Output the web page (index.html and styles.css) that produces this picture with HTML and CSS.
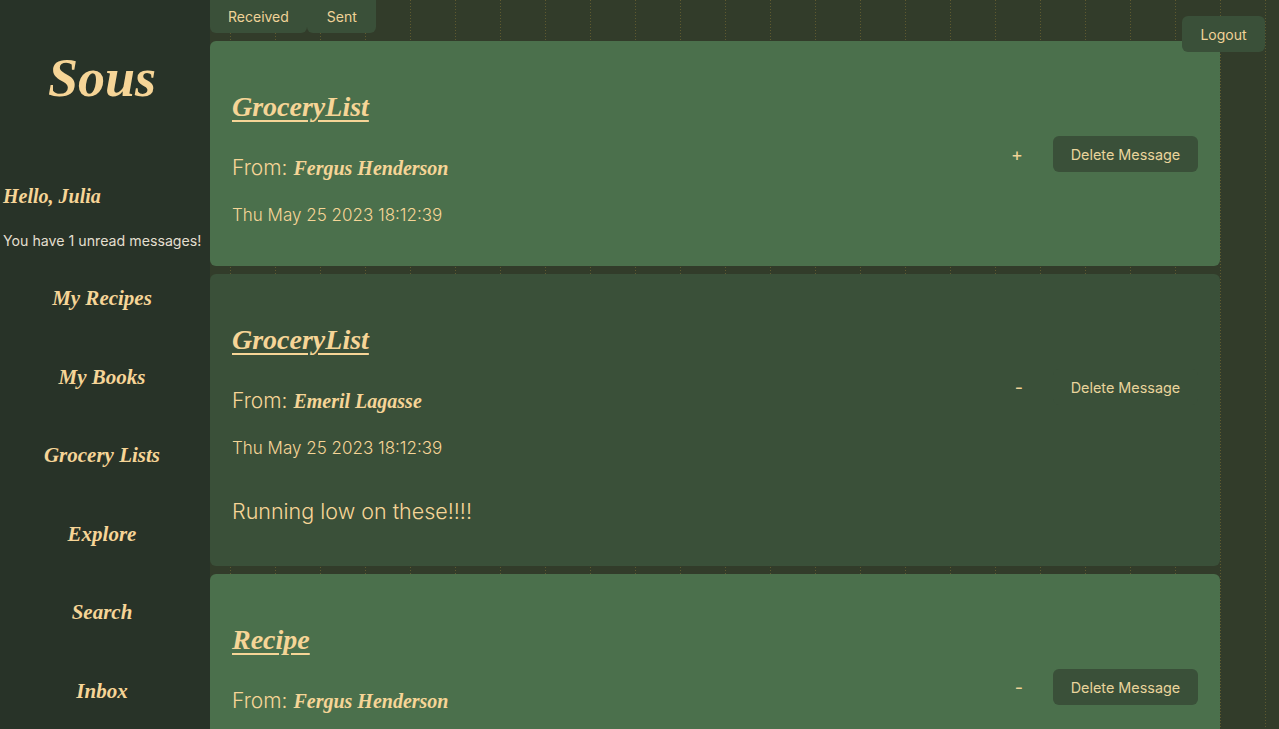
FILE: index.html
```html
<!DOCTYPE html>
<html lang="en">
<head>
<meta charset="utf-8">
<title>Sous - Inbox</title>
<link rel="stylesheet" href="styles.css">
</head>
<body>
<div class="app">
  <aside class="sidebar">
    <h1 class="logo">Sous</h1>
    <p class="hello">Hello, Julia</p>
    <p class="unread">You have 1 unread messages!</p>
    <nav class="nav">
      <a href="#">My Recipes</a>
      <a href="#">My Books</a>
      <a href="#">Grocery Lists</a>
      <a href="#">Explore</a>
      <a href="#">Search</a>
      <a href="#">Inbox</a>
    </nav>
  </aside>
  <main class="main">
    <div class="tabs">
      <button class="tab">Received</button>
      <button class="tab tab-sent">Sent</button>
    </div>
    <section class="card card-light">
      <div class="card-head">
        <div class="info">
          <h2 class="title"><a href="#">GroceryList</a></h2>
          <p class="from">From: <span class="sender">Fergus Henderson</span></p>
          <p class="date">Thu May 25 2023 18:12:39</p>
        </div>
        <div class="actions">
          <span class="toggle">+</span>
          <button class="delete">Delete Message</button>
        </div>
      </div>
    </section>
    <section class="card card-dark">
      <div class="card-head">
        <div class="info">
          <h2 class="title"><a href="#">GroceryList</a></h2>
          <p class="from">From: <span class="sender">Emeril Lagasse</span></p>
          <p class="date">Thu May 25 2023 18:12:39</p>
        </div>
        <div class="actions">
          <span class="toggle minus">-</span>
          <button class="delete">Delete Message</button>
        </div>
      </div>
      <p class="body">Running low on these!!!!</p>
    </section>
    <section class="card card-light">
      <div class="card-head">
        <div class="info">
          <h2 class="title"><a href="#">Recipe</a></h2>
          <p class="from">From: <span class="sender">Fergus Henderson</span></p>
          <p class="date">Thu May 25 2023 18:12:39</p>
        </div>
        <div class="actions">
          <span class="toggle minus">-</span>
          <button class="delete">Delete Message</button>
        </div>
      </div>
    </section>
  </main>
  <button class="logout">Logout</button>
</div>
</body>
</html>
```
FILE: styles.css
```css
* { box-sizing: border-box; }
html, body { margin: 0; padding: 0; height: 100%; overflow: hidden; }
body {
  background-color: #323c2a;
  background-image:
    linear-gradient(to bottom, transparent 0 1px, #323c2a 1px 3px),
    linear-gradient(to right, #5f5a2f 0 1px, transparent 1px 45px);
  background-size: 100% 3px, 45px 100%;
  background-position: 0 0, 5px 0;
  font-family: Inter, "Noto Sans", sans-serif;
  color: #f6d597;
}
.app { display: flex; min-height: 100vh; position: relative; }

.sidebar {
  width: 210px;
  flex: none;
  background: #283328;
  min-height: 100vh;
  padding: 0 6px 0 3px;
}
.logo {
  margin: 46px 0 0 -3px;
  text-align: center;
  font-family: "Liberation Serif", serif;
  font-style: italic;
  font-weight: bold;
  font-size: 54px;
  line-height: 64px;
}
.hello {
  margin: 72px 0 0;
  font-family: "Liberation Serif", serif;
  font-style: italic;
  font-weight: bold;
  font-size: 20px;
  line-height: 28px;
}
.unread {
  margin: 21px 0 0;
  font-size: 14.2px;
  line-height: 20px;
  color: #e3dfcf;
  white-space: nowrap;
}
.nav {
  display: flex;
  flex-direction: column;
  align-items: center;
  gap: 48.6px;
  margin: 32px 0 0 -3px;
}
.nav a {
  font-family: "Liberation Serif", serif;
  font-style: italic;
  font-weight: bold;
  font-size: 21px;
  line-height: 30px;
  color: #f6d597;
  text-decoration: none;
}

.main {
  flex: 1;
  padding: 0 59px 0 0;
  display: flex;
  flex-direction: column;
  gap: 8px;
}
.tabs { display: flex; margin-top: -6px; }
.tab {
  height: 39px;
  padding: 6px 18px 0;
  border: none;
  border-radius: 6px;
  background: #3a5039;
  color: #f0d398;
  font-family: Inter, sans-serif;
  font-size: 14px;
}
.tab-sent { padding: 6px 19px 0 20px; }

.card {
  border-radius: 6px;
  padding: 24px 22px 23px;
  flex: none;
}
.card-light { background: #4b704c; }
.card-dark { background: #3a5039; }
.card-head { display: flex; align-items: center; justify-content: space-between; }
.title {
  margin: 24px 0 29px;
  font-family: "Liberation Serif", serif;
  font-style: italic;
  font-weight: bold;
  font-size: 28px;
  line-height: 36px;
}
.title a { color: #f6d597; text-decoration: underline; text-decoration-thickness: 2px; text-underline-offset: 4px; }
.from {
  margin: 0 0 21px;
  font-size: 21px;
  line-height: 28px;
  font-weight: 300;
}
.sender {
  font-family: "Liberation Serif", serif;
  font-style: italic;
  font-weight: bold;
  font-size: 20px;
}
.date {
  margin: 0 0 16px;
  font-size: 17px;
  line-height: 24px;
  font-weight: 300;
}
.body {
  margin: 21px 0 18px;
  font-size: 21.5px;
  line-height: 28px;
  font-weight: 300;
}
.actions { display: flex; align-items: center; gap: 16px; }
.toggle {
  width: 40px;
  text-align: center;
  font-size: 18px;
  color: #f0d398;
}
.toggle.minus { padding-left: 4px; }
.delete {
  height: 36px;
  width: 145px;
  border: none;
  border-radius: 6px;
  background: #3a5039;
  color: #e9d49c;
  font-family: Inter, sans-serif;
  font-size: 14.4px;
}

.logout {
  position: absolute;
  top: 16px;
  right: 14px;
  width: 83px;
  height: 36px;
  padding-top: 2px;
  border: none;
  border-radius: 6px;
  background: #3a5039;
  color: #f0d398;
  font-family: Inter, sans-serif;
  font-size: 14px;
}
```
